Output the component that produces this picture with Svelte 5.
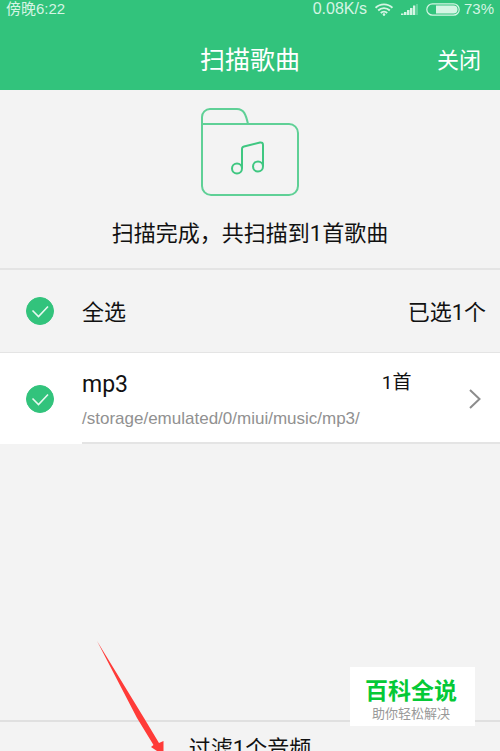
<script>
  let folders = $state([
    { name: "mp3", path: "/storage/emulated/0/miui/music/mp3/", songs: 1, checked: true },
  ]);

  let filtered = 1;

  let selected = $derived(folders.filter((f) => f.checked).length);
  let songTotal = $derived(folders.reduce((sum, f) => sum + f.songs, 0));
  let allChecked = $derived(selected === folders.length);

  function toggleAll(e) {
    const checked = e.currentTarget.checked;
    folders.forEach((f) => (f.checked = checked));
  }
</script>

{#snippet tick()}
  <svg viewBox="0 0 28 28" width="28" height="28" aria-hidden="true">
    <path d="M6.500 13.500l6 6L22 9.500" fill="none" stroke="#e8f8f0" stroke-width="1.600" />
  </svg>
{/snippet}

<div class="app">
  <header>
    <div class="status">
      <span class="time">傍晚6:22</span>
      <span class="rate">0.08K/s</span>
      <svg class="wifi" viewBox="0 0 18 13" width="18" height="13" aria-hidden="true">
        <g fill="none" stroke="currentColor" stroke-width="1.9">
          <path d="M.6 4.8a12 12 0 0 1 16.8 0" />
          <path d="M3.2 7.5a8.2 8.2 0 0 1 11.6 0" />
          <path d="M5.8 10a4.6 4.6 0 0 1 6.4 0" />
        </g>
        <circle cx="9" cy="11.6" r="1.3" fill="currentColor" />
      </svg>
      <svg class="signal" viewBox="0 0 17 12" width="17" height="12" aria-hidden="true">
        <path
          d="M0 10.500h2.500v1.500H0zM3 9h2.500v3H3zM6 7h2.500v5H6zM9 5h2.500v7H9zM12 2.500h2.300V12H12z"
          fill="currentColor"
        />
        <path d="M15 1h2v11h-2z" fill="currentColor" opacity=".3" />
      </svg>
      <svg class="battery" viewBox="0 0 34 13" width="34" height="13" aria-hidden="true">
        <rect x=".8" y=".8" width="32.4" height="11.4" rx="5.7" fill="none" stroke="currentColor" stroke-width="1.2" />
        <path d="M10 2.5h17.5a4 4 0 0 1 0 8H10z" fill="currentColor" />
      </svg>
      <span>73%</span>
    </div>
    <div class="bar">
      <h1>扫描歌曲</h1>
      <button class="close">关闭</button>
    </div>
  </header>

  <section class="result">
    <svg viewBox="0 0 98 88" width="98" height="88" aria-hidden="true">
      <g fill="none" stroke="#5fd096" stroke-width="2">
        <path d="M1 16V9a8 8 0 0 1 8-8h27c7 0 9 6 11 15" />
        <path d="M1 16h87a9 9 0 0 1 9 9v53a9 9 0 0 1-9 9H10a9 9 0 0 1-9-9z" />
        <path d="M41 60V41q0-2 2-2.500l16-4q3-.5 3 2.500V58" stroke="#3fc781" />
        <circle cx="36" cy="60.500" r="5" stroke="#3fc781" />
        <circle cx="57" cy="58.500" r="5" stroke="#3fc781" />
      </g>
    </svg>
    <p>扫描完成，共扫描到{songTotal}首歌曲</p>
  </section>

  <div class="row all">
    <label class="check">
      <input type="checkbox" id="all" checked={allChecked} onchange={toggleAll} />
      {@render tick()}
    </label>
    <div class="summary">
      <label for="all">全选</label>
      <span>已选{selected}个</span>
    </div>
  </div>

  <ul>
    {#each folders as folder, i}
      <li class="row">
        <label class="check">
          <input type="checkbox" id="folder-{i}" bind:checked={folder.checked} />
          {@render tick()}
        </label>
        <div class="folder">
          <label class="info" for="folder-{i}">
            <span class="title">{folder.name}</span>
            <span class="path">{folder.path}</span>
          </label>
          <span class="count">{folder.songs}首</span>
          <button class="open" aria-label={folder.name}>
            <svg viewBox="0 0 12 20" width="12" height="20" aria-hidden="true">
              <path d="M1 1l9.500 9L1 19" fill="none" stroke="#8c8c8c" stroke-width="2" />
            </svg>
          </button>
        </div>
      </li>
    {/each}
  </ul>

  <footer>
    <button>过滤{filtered}个音频</button>
  </footer>

  <svg class="arrow" viewBox="0 0 68 111" width="68" height="111" aria-hidden="true">
    <path d="M0 1L47 78L62 103L66.500 101V111H60L54 107L56.500 105L40 78z" fill="#ff3b38" />
  </svg>

  <div class="stamp">
    <strong>百科全说</strong>
    <small>助你轻松解决</small>
  </div>
</div>

<style>
  :global(body) {
    margin: 0;
  }

  .app {
    position: relative;
    display: flex;
    flex-direction: column;
    height: 100vh;
    overflow: hidden;
    background: #f3f3f3;
    color: #111;
    font-family: Roboto, "Noto Sans CJK SC", sans-serif;
    font-size: 22px;
    line-height: 32px;
  }

  button {
    border: 0;
    padding: 0;
    background: none;
    color: inherit;
    font: inherit;
  }

  header {
    background: #32c37c;
    color: #fff;
  }

  .status {
    display: flex;
    align-items: center;
    height: 18px;
    padding: 0 6px;
    color: #d5f5e4;
    font-family: "Liberation Sans", "Noto Sans CJK SC", sans-serif;
    font-size: 15px;
    line-height: 18px;
  }

  .time {
    flex: 1;
  }

  .rate {
    font-size: 16px;
  }

  .wifi,
  .signal {
    margin-left: 8px;
  }

  .battery {
    margin: 0 4px 0 8px;
  }

  .bar {
    display: grid;
    grid-template-columns: 1fr auto 1fr;
    align-items: center;
    height: 72px;
    padding: 14px 19px 0;
    box-sizing: border-box;
  }

  h1 {
    grid-column: 2;
    margin: 0;
    font-size: 25px;
    font-weight: 400;
  }

  .close {
    justify-self: end;
  }

  .result {
    display: flex;
    flex-direction: column;
    align-items: center;
    gap: 22px;
    padding: 18px 0;
    border-bottom: 2px solid #e4e4e4;
  }

  .result p {
    margin: 0;
  }

  .row {
    display: flex;
    align-items: center;
    padding-left: 26px;
  }

  .all {
    height: 82px;
    border-bottom: 1px solid #e4e4e4;
  }

  .summary {
    display: flex;
    flex: 1;
    justify-content: space-between;
    padding: 4px 14px 0 0;
  }

  .check {
    display: grid;
    flex: none;
    margin-right: 28px;
  }

  .check input {
    grid-area: 1 / 1;
    appearance: none;
    width: 28px;
    height: 28px;
    margin: 0;
    border: 1px solid #bbb;
    border-radius: 50%;
  }

  .check input:checked {
    border-color: #32c37c;
    background: #32c37c;
  }

  .check svg {
    grid-area: 1 / 1;
    z-index: 1;
    pointer-events: none;
  }

  ul {
    flex: 1;
    margin: 0;
    padding: 0;
    list-style: none;
  }

  li {
    background: #fff;
  }

  .folder {
    display: flex;
    flex: 1;
    align-items: center;
    padding: 12px 19px 9px 0;
    border-bottom: 2px solid #e4e4e4;
  }

  .info {
    display: flex;
    flex: none;
    flex-direction: column;
  }

  .title {
    font-size: 23px;
    line-height: 40px;
  }

  .path {
    color: #919191;
    font-family: "Liberation Sans", sans-serif;
    font-size: 17px;
    line-height: 28px;
  }

  .count {
    flex: 1;
    align-self: flex-start;
    padding-left: 22px;
    font-size: 19px;
    line-height: 36px;
  }

  .open {
    display: flex;
  }

  footer {
    display: flex;
    justify-content: center;
    flex: none;
    height: 31px;
    padding-top: 11px;
    box-sizing: border-box;
    border-top: 2px solid #e0e0e0;
  }

  .arrow {
    position: absolute;
    bottom: 0;
    left: 97px;
  }

  .stamp {
    position: absolute;
    right: 25px;
    bottom: 25px;
    display: flex;
    flex-direction: column;
    align-items: center;
    width: 125px;
    padding: 11px 3px 4px 0;
    box-sizing: border-box;
    background: #fff;
  }

  .stamp strong {
    color: #05c936;
    font-size: 23px;
    font-weight: 700;
    line-height: 28px;
  }

  .stamp small {
    color: #999;
    font-size: 13px;
    line-height: 16px;
  }
</style>
